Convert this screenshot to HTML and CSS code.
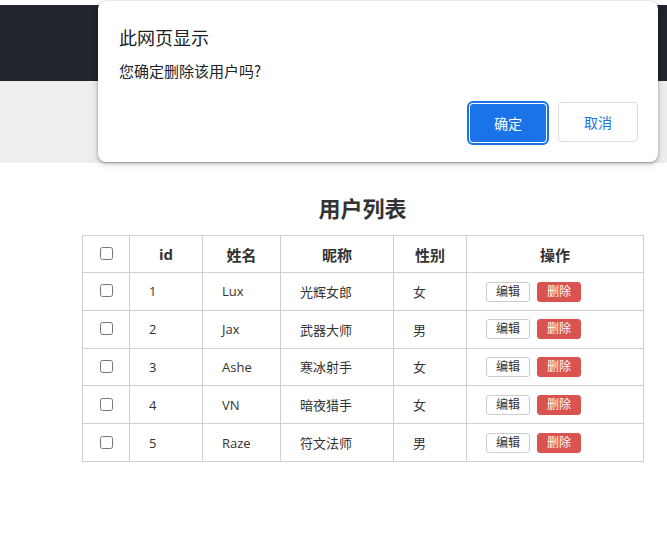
FILE: index.html
```html
<!DOCTYPE html>
<html lang="zh">
<head>
<meta charset="utf-8">
<title>用户列表</title>
<link rel="stylesheet" href="styles.css">
</head>
<body>
<div class="topgap"></div>
<div class="navbar"></div>
<div class="jumbo"></div>
<main class="content">
  <h2 class="title">用户列表</h2>
  <table class="users">
    <thead>
      <tr>
        <th class="c-check"><input type="checkbox"></th>
        <th class="c-id">id</th>
        <th class="c-name">姓名</th>
        <th class="c-nick">昵称</th>
        <th class="c-sex">性别</th>
        <th class="c-op">操作</th>
      </tr>
    </thead>
    <tbody>
      <tr><td class="c-check"><input type="checkbox"></td><td>1</td><td>Lux</td><td>光辉女郎</td><td>女</td><td><span class="btn btn-edit">编辑</span><span class="btn btn-del">删除</span></td></tr>
      <tr><td class="c-check"><input type="checkbox"></td><td>2</td><td>Jax</td><td>武器大师</td><td>男</td><td><span class="btn btn-edit">编辑</span><span class="btn btn-del">删除</span></td></tr>
      <tr><td class="c-check"><input type="checkbox"></td><td>3</td><td>Ashe</td><td>寒冰射手</td><td>女</td><td><span class="btn btn-edit">编辑</span><span class="btn btn-del">删除</span></td></tr>
      <tr><td class="c-check"><input type="checkbox"></td><td>4</td><td>VN</td><td>暗夜猎手</td><td>女</td><td><span class="btn btn-edit">编辑</span><span class="btn btn-del">删除</span></td></tr>
      <tr><td class="c-check"><input type="checkbox"></td><td>5</td><td>Raze</td><td>符文法师</td><td>男</td><td><span class="btn btn-edit">编辑</span><span class="btn btn-del">删除</span></td></tr>
    </tbody>
  </table>
</main>

<div class="dialog">
  <div class="dlg-title">此网页显示</div>
  <div class="dlg-msg">您确定删除该用户吗?</div>
  <div class="dlg-actions">
    <span class="dlg-btn dlg-ok">确定</span>
    <span class="dlg-btn dlg-cancel">取消</span>
  </div>
</div>
</body>
</html>
```

FILE: styles.css
```css
* { box-sizing: border-box; }
html, body { margin: 0; padding: 0; background: #fff; }
body {
  font-family: "Open Sans", "Noto Sans CJK SC", sans-serif;
  color: #333;
  font-size: 13px;
  width: 667px;
  height: 535px;
  overflow: hidden;
  position: relative;
}
.topgap { height: 5px; background: #fff; }
.navbar { height: 76px; background: #22252d; }
.jumbo { height: 82px; background: #eeeeee; }
.content { padding: 30px 0 0 82px; }
.title {
  width: 561px;
  margin: 0 0 12px 0;
  text-align: center;
  font-size: 22px;
  font-weight: 700;
  line-height: 30px;
  color: #333;
}
.users {
  width: 561px;
  border-collapse: collapse;
  table-layout: fixed;
}
.users th, .users td {
  border: 1px solid #cfcfcf;
  padding: 0 0 0 19px;
  text-align: left;
  vertical-align: middle;
  white-space: nowrap;
}
.users th {
  height: 37px;
  font-size: 15px;
  font-weight: 700;
  text-align: center;
  padding: 0;
}
.users td { height: 37.8px; font-size: 13px; }
.users .c-check { width: 47px; text-align: center; padding: 0; }
.c-id { width: 73px; }
.c-name { width: 78px; }
.c-nick { width: 113px; }
.c-sex { width: 73px; }
.c-op { width: 177px; }
input[type="checkbox"] { margin: 0; width: 13px; height: 13px; vertical-align: middle; position: relative; top: -2px; }
.btn {
  display: inline-block;
  font-size: 12px;
  line-height: 16px;
  padding: 1px 9px;
  border-radius: 3px;
  border: 1px solid #ccc;
  vertical-align: middle;
}
.btn-edit { background: #fff; color: #333; }
.btn-del { background: #d9534f; border-color: #d9534f; color: #fff; margin-left: 7px; }

.dialog {
  position: absolute;
  left: 98px;
  top: 1px;
  width: 560px;
  height: 161px;
  background: #fff;
  border-radius: 8px;
  box-shadow: 0 1px 3px rgba(0,0,0,0.35), 0 2px 8px rgba(0,0,0,0.15);
  padding: 23px 20px 0 21px;
  font-family: "Noto Sans CJK SC", "Open Sans", sans-serif;
  color: #202124;
}
.dlg-title { font-size: 18px; line-height: 26px; }
.dlg-msg { font-size: 15px; line-height: 22px; margin-top: 10px; }
.dlg-actions {
  display: flex;
  justify-content: flex-end;
  gap: 11px;
  margin-top: 20px;
}
.dlg-btn {
  display: inline-flex;
  align-items: center;
  justify-content: center;
  width: 80px;
  height: 40px;
  border-radius: 4px;
  font-size: 14px;
}
.dlg-ok {
  width: 78px;
  height: 40px;
  background: #1a73e8;
  color: #fff;
  border: 1px solid #fff;
  outline: 2px solid #1a73e8;
  outline-offset: 0;
  margin-top: 1px;
}
.dlg-cancel {
  background: #fff;
  color: #1a73e8;
  border: 1px solid #dadce0;
}
```
